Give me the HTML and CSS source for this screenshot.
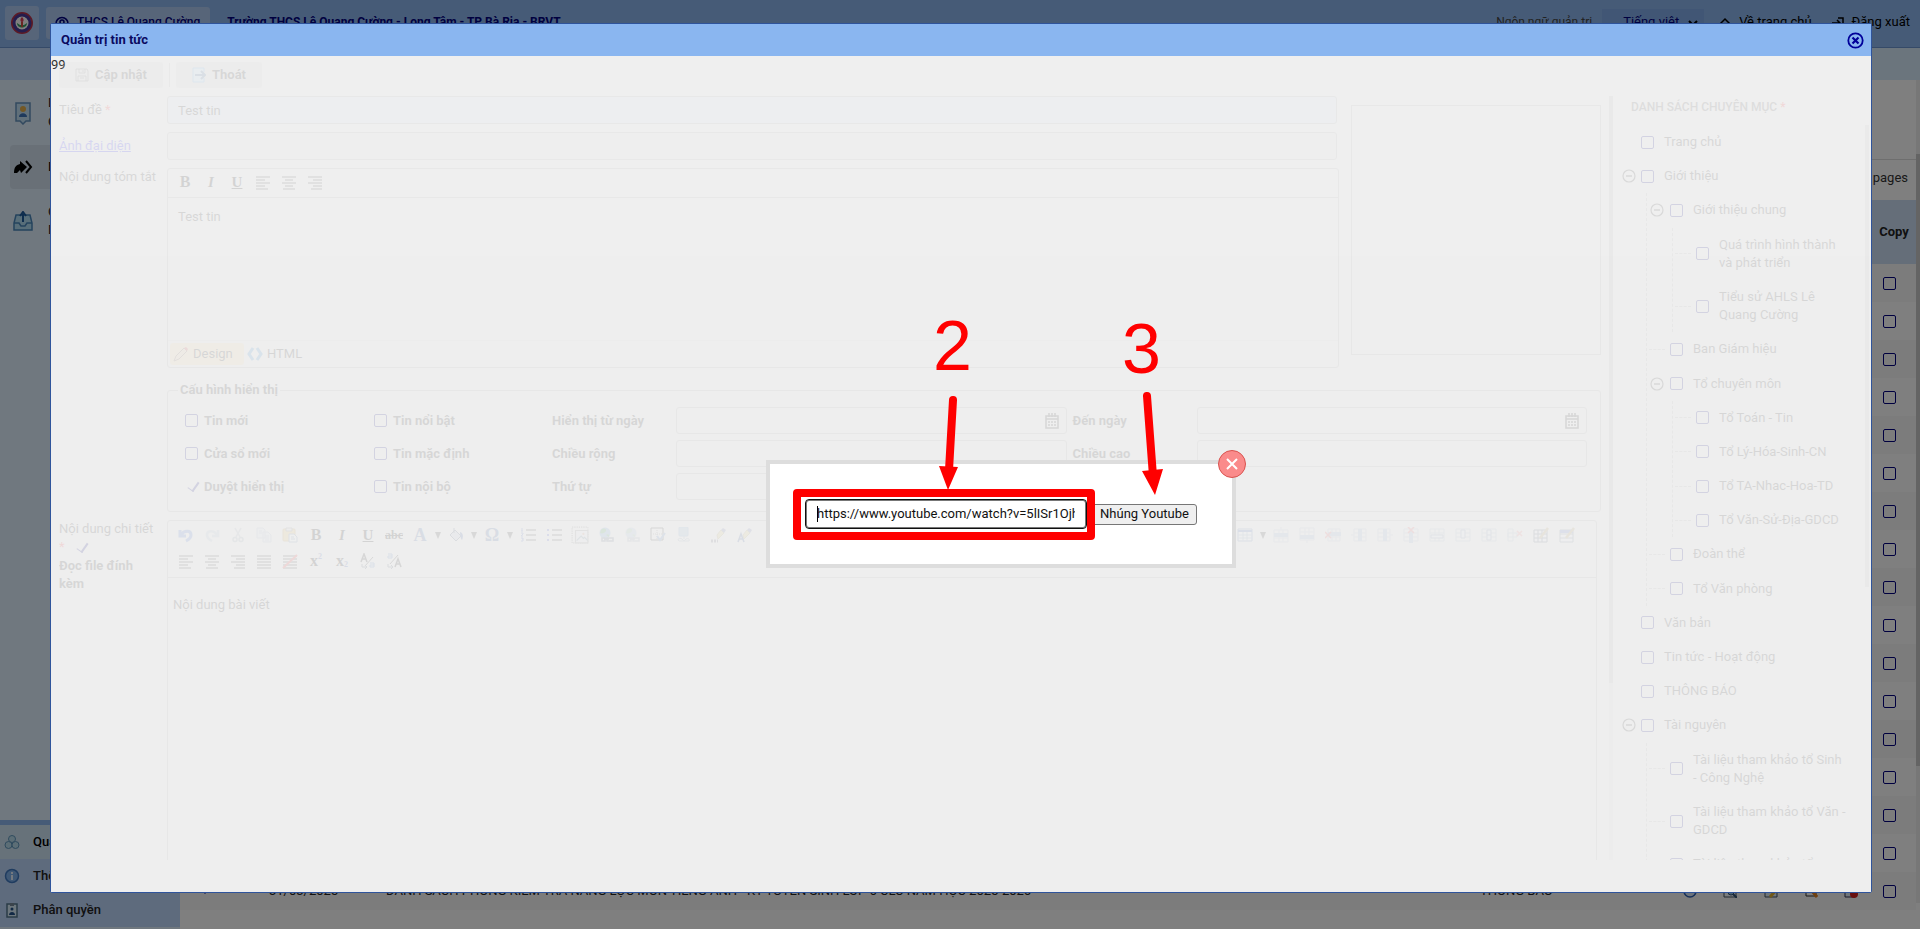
FILE: index.html
```html
<!DOCTYPE html>
<html lang="vi">
<head>
<meta charset="utf-8">
<title>Quản trị tin tức</title>
<link rel="stylesheet" href="styles.css">
</head>
<body>
<svg class="sprite" aria-hidden="true">
  <symbol id="al" viewBox="0 0 16 16"><path d="M1 3h14M1 6h9M1 9h14M1 12h9M1 15h12" stroke="#000" fill="none"/></symbol>
  <symbol id="ac" viewBox="0 0 16 16"><path d="M1 3h14M4 6h8M1 9h14M4 12h8M2 15h12" stroke="#000" fill="none"/></symbol>
  <symbol id="ar" viewBox="0 0 16 16"><path d="M1 3h14M6 6h9M1 9h14M6 12h9M4 15h11" stroke="#000" fill="none"/></symbol>
  <symbol id="aj" viewBox="0 0 16 16"><path d="M1 3h14M1 6h14M1 9h14M1 12h14M1 15h14" stroke="#000" fill="none"/></symbol>
  <symbol id="an" viewBox="0 0 16 16"><path d="M1 3h14M1 6h14M1 9h14M1 12h14M1 15h14" stroke="#000" fill="none"/><path d="M1 15L15 2" stroke="#e33" stroke-width="2"/></symbol>
  <symbol id="undo" viewBox="0 0 16 16"><path d="M2 3v6h6M3 8c3-5 10-5 10 0 0 3-3 5-5 6" stroke="#4a78d8" stroke-width="3" fill="none"/></symbol>
  <symbol id="redo" viewBox="0 0 16 16"><path d="M14 3v6H8M13 8C10 3 3 3 3 8c0 3 3 5 5 6" stroke="#b8c6d8" stroke-width="2.5" fill="none"/></symbol>
  <symbol id="cut" viewBox="0 0 16 16"><path d="M5 1l5 9M11 1L6 10" stroke="#aab4c0" stroke-width="1.5"/><circle cx="5" cy="12.500" r="2" stroke="#9aa8b8" stroke-width="1.500" fill="none"/><circle cx="11" cy="12.500" r="2" stroke="#9aa8b8" stroke-width="1.500" fill="none"/></symbol>
  <symbol id="copy" viewBox="0 0 16 16"><path d="M1 1h6l2 2v8H1zM7 5h5l3 3v7H7z" fill="#dfe6ef" stroke="#b3bfcc"/><path d="M9 9h4M9 11h4M9 13h4M3 4h3M3 6h3" stroke="#b3bfcc"/></symbol>
  <symbol id="paste" viewBox="0 0 16 16"><rect x="1" y="2" width="12" height="12" rx="1" fill="#e8c468" stroke="#c29a40"/><path d="M4 1h6v3H4z" fill="#ddd" stroke="#888"/><path d="M7 7h5l3 3v5H7z" fill="#f3f7fb" stroke="#6a86a8"/><path d="M9 10h3M9 12h4" stroke="#6a86a8"/></symbol>
  <symbol id="bucket" viewBox="0 0 16 16"><path d="M2 8l5-5 6 6-5 5z" fill="#c4d0e0" stroke="#4a5c74"/><path d="M6 1v5" stroke="#4a5c74"/><path d="M12 5c4 1 3 6 2 8-1-1-2-4-2-8z" fill="#3c60a8"/></symbol>
  <symbol id="ol" viewBox="0 0 16 16"><path d="M6 3h10M6 8h10M6 13h10" stroke="#000"/><path d="M2 1v3M1 4h2M1 6h2v1L1 9h2M1 11h2v3H1M2 12h1" stroke="#4a6ac8" fill="none"/></symbol>
  <symbol id="ul" viewBox="0 0 16 16"><path d="M6 3h10M6 8h10M6 13h10" stroke="#000"/><path d="M1 2h2v2H1zM1 7h2v2H1zM1 12h2v2H1z" fill="#4a5ad0"/></symbol>
  <symbol id="img" viewBox="0 0 16 16"><path d="M1 1h14v14H1z" fill="none" stroke="#777" stroke-dasharray="1 1"/><path d="M4 4h11v11H4z" fill="#e6ebf2" stroke="#8a8a8a"/><path d="M5 13l4-4 2 2 1-1 3 3" fill="none" stroke="#689"/><circle cx="11" cy="7" r="1" fill="#dc9878"/></symbol>
  <symbol id="link" viewBox="0 0 16 16"><circle cx="7" cy="6" r="5.500" fill="#6fa6dc"/><path d="M3 3c3-3 6-1 5 1S4 7 2 6zM8 8c2-2 4 0 3 2z" fill="#45a555"/><path d="M4 11h3v3H4zM9 11h6v3H9zM6 12h5" fill="none" stroke="#5a6c84" stroke-width="1.500"/></symbol>
  <symbol id="check" viewBox="0 0 16 16"><path d="M1 1h12v12H1z" fill="none" stroke="#222"/><path d="M7 3v9M3 7h9" stroke="#777" stroke-dasharray="1 1"/><path d="M7 9l3 4 5-7" fill="none" stroke="#5a86c8" stroke-width="2"/></symbol>
  <symbol id="pin" viewBox="0 0 16 16"><rect x="3" y="0" width="9" height="9" rx="1" fill="#96c0dc" stroke="#78a4cc"/><path d="M8 9v3M2 13c0-2 3-2 4-1l2 2 2-2c2-1 4 0 3 2H3z" fill="none" stroke="#9aabc0"/></symbol>
  <symbol id="brush" viewBox="0 0 16 16"><path d="M6 8l4-5 3 3-6 6z" fill="#e0cf80" stroke="#b8a868"/><path d="M10 3l2-2 3 2-2 3z" fill="#6a7ab0"/><path d="M0 14h7" stroke="#667" stroke-width="3" stroke-dasharray="2 1"/></symbol>
  <symbol id="brush-a" viewBox="0 0 16 16"><path d="M6 8l4-5 3 3-6 6z" fill="#e0cf80" stroke="#b8a868"/><path d="M10 3l2-2 3 2-2 3z" fill="#6a7ab0"/><path d="M1 15l3-8 3 8M2 12h4" fill="none" stroke="#35589c" stroke-width="1.500"/></symbol>
  <symbol id="tbl" viewBox="0 0 16 16"><path d="M1 2h14v12H1z" fill="#f0f4fa" stroke="#5f7aa8"/><path d="M1 3h14v2H1z" fill="#4a6ac0"/><path d="M1 8h14M1 11h14M6 5v9M10 5v9" stroke="#8ea6c6"/></symbol>
  <symbol id="row-up" viewBox="0 0 16 16"><path d="M1 3h14v12H1zM1 11h14M6 3v12M10 3v12M8 0v3" fill="none" stroke="#b9c7dc"/><path d="M1 6h14v4H1z" fill="#9cb2d4"/></symbol>
  <symbol id="row-down" viewBox="0 0 16 16"><path d="M1 1h14v12H1zM1 5h14M6 1v12M10 1v12M8 13v3" fill="none" stroke="#b9c7dc"/><path d="M1 8h14v4H1z" fill="#9cb2d4"/></symbol>
  <symbol id="row-del" viewBox="0 0 16 16"><path d="M3 2h12v12H3zM3 10h12M7 2v12M11 2v12" fill="none" stroke="#b9c7dc"/><path d="M3 5h13v4H3z" fill="#9cb2d4"/><path d="M0 5l6 6M6 5l-6 6" stroke="#e66" stroke-width="1.500"/></symbol>
  <symbol id="col-l" viewBox="0 0 16 16"><path d="M3 2h12v12H3zM3 6h12M3 10h12M0 8h3" fill="none" stroke="#b9c7dc"/><path d="M7 2h4v12H7z" fill="#9cb2d4"/></symbol>
  <symbol id="col-r" viewBox="0 0 16 16"><path d="M1 2h12v12H1zM1 6h12M1 10h12M13 8h3" fill="none" stroke="#b9c7dc"/><path d="M6 2h4v12H6z" fill="#9cb2d4"/></symbol>
  <symbol id="col-del" viewBox="0 0 16 16"><path d="M1 2h14v12H1zM1 6h14M1 10h14" fill="none" stroke="#b9c7dc"/><path d="M6 4h4v12H6z" fill="#9cb2d4"/><path d="M5 0l6 6M11 0L5 6" stroke="#e66" stroke-width="1.500"/></symbol>
  <symbol id="merge-h" viewBox="0 0 16 16"><path d="M1 2h14v12H1zM1 6h14M6 2v12M10 2v12" fill="none" stroke="#b0bfd4"/><path d="M2 8h12v3H2z" fill="#e6eef8" stroke="#8295b4"/></symbol>
  <symbol id="merge-v" viewBox="0 0 16 16"><path d="M1 2h14v12H1zM1 6h14M1 10h14" fill="none" stroke="#b0bfd4"/><path d="M6 3h4v8H6z" fill="#e6eef8" stroke="#8295b4"/></symbol>
  <symbol id="cell-split" viewBox="0 0 16 16"><path d="M1 2h14v12H1zM1 6h14M1 10h14" fill="none" stroke="#b0bfd4"/><path d="M6 3h4v10H6zM6 8h4" fill="#e6eef8" stroke="#8295b4"/></symbol>
  <symbol id="cell-del" viewBox="0 0 16 16"><path d="M1 2h5v12H1zM1 6h9v4H1z" fill="none" stroke="#b0bfd4"/><path d="M10 4l5 5M15 4l-5 5" stroke="#e88" stroke-width="1.500"/></symbol>
  <symbol id="tedit" viewBox="0 0 16 16"><path d="M1 3h13v12H1zM1 7h13M1 11h13M5 3v12M9 3v12" fill="#f2f4f8" stroke="#4a586c"/><path d="M7 11l8-10" stroke="#b89a5a" stroke-width="2.500"/></symbol>
  <symbol id="tprop" viewBox="0 0 16 16"><path d="M1 3h13v12H1zM1 7h13M1 11h13" fill="#f2f4f8" stroke="#6a788c"/><path d="M1 3h13v3H1z" fill="#5a7ad0"/><path d="M7 11l8-10" stroke="#b89a5a" stroke-width="2.500"/></symbol>
  <symbol id="cal" viewBox="0 0 16 16"><path d="M2 3h12v12H2zM2 6h12M5 0v4M8 0v4M11 0v4" fill="none" stroke="#222" stroke-width="1.500"/><path d="M4 9h8M4 12h8" stroke="#222" stroke-width="1.500" stroke-dasharray="2 1"/></symbol>
  <symbol id="minus" viewBox="0 0 14 14"><circle cx="7" cy="7" r="6" fill="none" stroke="#333" stroke-width="1.200"/><path d="M4 7h6" stroke="#333" stroke-width="1.500"/></symbol>
  <symbol id="to-small" viewBox="0 0 16 16"><path d="M1 9l3-8 3 8M2 6h4" fill="none" stroke="#222" stroke-width="1.500"/><path d="M5 13L13 4" stroke="#333"/><path d="M10 10h4v4h-4v-2h4" fill="none" stroke="#4a7ac0"/><path d="M2 11v3h4M5 12l2 2-2 2" fill="none" stroke="#4a5a70"/></symbol>
  <symbol id="to-big" viewBox="0 0 16 16"><path d="M9 14l3-8 3 8M10 11h4" fill="none" stroke="#222" stroke-width="1.500"/><path d="M4 11L12 2" stroke="#333"/><path d="M2 1h4v4H2V3h4" fill="none" stroke="#4a7ac0"/><path d="M2 11v3h4M5 12l2 2-2 2" fill="none" stroke="#4a5a70"/></symbol>
</svg>

<header class="top">
  <span class="logo"><svg width="24" height="24" viewBox="0 0 24 24"><circle cx="12" cy="12" r="10" fill="#fff" stroke="#b8354b" stroke-width="2"/><circle cx="12" cy="12" r="8" fill="none" stroke="#4a3a9a" stroke-width="3"/><circle cx="12" cy="12" r="6" fill="#fff"/><path d="M7 12c0 6 10 6 10 0l-3 2h-4z" fill="#3aa568"/><path d="M12 6c-3 3-1 5 0 5s3-2 0-5z" fill="#e0405a"/><path d="M12 11v5" stroke="#d05040" stroke-width="2"/></svg></span>
  <span class="site"><svg width="14" height="14" viewBox="0 0 14 14"><path d="M3 12a6 6 0 1 1 8 0" fill="none" stroke="#000080" stroke-width="1.500"/><circle cx="7" cy="6" r="2" fill="none" stroke="#000080" stroke-width="1.500"/><path d="M5 12V9h4v3" fill="none" stroke="#000080" stroke-width="1.500"/></svg>THCS Lê Quang Cường</span>
  <b class="school">Trường THCS Lê Quang Cường - Long Tâm - TP Bà Rịa - BRVT</b>
  <label class="lang" for="lang">Ngôn ngữ quản trị</label>
  <span class="lang-box"><select id="lang" class="lang-select"><option>Tiếng việt</option></select><svg width="10" height="8" viewBox="0 0 10 8"><path d="M1 2l4 4 4-4" fill="none" stroke="#000" stroke-width="2"/></svg></span>
  <a class="top-link" href="#"><svg width="12" height="12" viewBox="0 0 12 12"><path d="M1 7l5-5 5 5M3 6v5h6V6" fill="none" stroke="#000" stroke-width="1.500"/></svg>Về trang chủ</a>
  <a class="top-link" href="#"><svg width="12" height="12" viewBox="0 0 12 12"><path d="M0 6h7M5 3l3 3-3 3M6 1h5v10H6" fill="none" stroke="#000" stroke-width="1.500"/></svg>Đăng xuất</a>
</header>
<div class="sub"><div class="sub-left"></div></div>
<div class="page">
  <nav class="side">
    <a class="side-item" href="#"><svg width="20" height="24" viewBox="0 0 20 24"><path d="M3 2h14v18h-4l-3 3-3-3H3z" fill="#c3e0f5" stroke="#6593be" stroke-width="1.500"/><circle cx="10" cy="8" r="3" fill="#e6b04a"/><path d="M6 16c0-5 8-5 8 0z" fill="#3f74b8"/></svg><span>D<br>C</span></a>
    <a class="side-item on" href="#"><svg width="20" height="16" viewBox="0 0 20 16"><path d="M1 14c0-6 2-8 6-9V2l7 6-6 6-1-3-3 3z" fill="#000"/><path d="M13 2l5 6-5 6" fill="none" stroke="#000" stroke-width="2"/></svg><span>D</span></a>
    <a class="side-item" href="#"><svg width="20" height="20" viewBox="0 0 20 20"><path d="M3 4h14l2 8v7H1v-7z" fill="#b0dcf2" stroke="#4a86ba" stroke-width="1.500"/><path d="M1 12h5l2 3h4l2-3h5" fill="none" stroke="#4a86ba" stroke-width="1.500"/><path d="M10 11V3M7 5l3-4 3 4" fill="none" stroke="#1d5a9c" stroke-width="2"/></svg><span>C<br>D</span></a>
    <div class="side-foot">
      <a class="foot-item sel" href="#"><svg width="16" height="16" viewBox="0 0 16 16"><g fill="#b9dcec" stroke="#5f96bc" stroke-width="1"><circle cx="8" cy="5" r="3.500"/><circle cx="4.500" cy="11" r="3.500"/><circle cx="11.500" cy="11" r="3.500"/></g></svg>Quản trị</a>
      <a class="foot-item" href="#"><svg width="16" height="16" viewBox="0 0 16 16"><circle cx="8" cy="8" r="6.500" fill="#7fb0ea" stroke="#3f78c0" stroke-width="1.500"/><path d="M8 4v2M8 7v5" stroke="#e8f2ff" stroke-width="2"/></svg>Thông tin</a>
      <a class="foot-item" href="#"><svg width="16" height="16" viewBox="0 0 16 16"><path d="M3 2h10v13H3z" fill="#d8ecf8" stroke="#54788f" stroke-width="1.500"/><path d="M6 1h4v3H6z" fill="#789"/><circle cx="8" cy="7" r="1.500" fill="#24538a"/><path d="M5 13c0-4 6-4 6 0z" fill="#24538a"/></svg>Phân quyền</a>
    </div>
  </nav>
  <main class="main">
    <div class="pager">pages</div>
    <table class="grid">
      <thead><tr><th class="c-mark"></th><th class="c-date"></th><th></th><th class="c-cat"></th><th class="c-act"></th><th class="c-copy">Copy</th></tr></thead>
      <tbody>
        <tr><td colspan="5"></td><td class="c-copy"><input type="checkbox" class="cb" aria-label="Copy 1"></td></tr>
        <tr><td colspan="5"></td><td class="c-copy"><input type="checkbox" class="cb" aria-label="Copy 2"></td></tr>
        <tr><td colspan="5"></td><td class="c-copy"><input type="checkbox" class="cb" aria-label="Copy 3"></td></tr>
        <tr><td colspan="5"></td><td class="c-copy"><input type="checkbox" class="cb" aria-label="Copy 4"></td></tr>
        <tr><td colspan="5"></td><td class="c-copy"><input type="checkbox" class="cb" aria-label="Copy 5"></td></tr>
        <tr><td colspan="5"></td><td class="c-copy"><input type="checkbox" class="cb" aria-label="Copy 6"></td></tr>
        <tr><td colspan="5"></td><td class="c-copy"><input type="checkbox" class="cb" aria-label="Copy 7"></td></tr>
        <tr><td colspan="5"></td><td class="c-copy"><input type="checkbox" class="cb" aria-label="Copy 8"></td></tr>
        <tr><td colspan="5"></td><td class="c-copy"><input type="checkbox" class="cb" aria-label="Copy 9"></td></tr>
        <tr><td colspan="5"></td><td class="c-copy"><input type="checkbox" class="cb" aria-label="Copy 10"></td></tr>
        <tr><td colspan="5"></td><td class="c-copy"><input type="checkbox" class="cb" aria-label="Copy 11"></td></tr>
        <tr><td colspan="5"></td><td class="c-copy"><input type="checkbox" class="cb" aria-label="Copy 12"></td></tr>
        <tr><td colspan="5"></td><td class="c-copy"><input type="checkbox" class="cb" aria-label="Copy 13"></td></tr>
        <tr><td colspan="5"></td><td class="c-copy"><input type="checkbox" class="cb" aria-label="Copy 14"></td></tr>
        <tr><td colspan="5"></td><td class="c-copy"><input type="checkbox" class="cb" aria-label="Copy 15"></td></tr>
        <tr><td colspan="5"></td><td class="c-copy"><input type="checkbox" class="cb" aria-label="Copy 16"></td></tr>
        <tr>
          <td class="c-mark"><svg width="10" height="10" viewBox="0 0 10 10"><path d="M1 4l4 5 4-5z" fill="#000080"/></svg></td>
          <td class="c-date">31/03/2025</td>
          <td class="c-title">DANH SÁCH PHÒNG KIỂM TRA NĂNG LỰC MÔN TIẾNG ANH - KT TUYỂN SINH LỚP 6 CLC NĂM HỌC 2025-2026</td>
          <td class="c-cat">THÔNG BÁO</td>
          <td class="c-act"><div class="acts">
            <svg width="14" height="14" viewBox="0 0 14 14"><circle cx="7" cy="7" r="6" fill="#dbe9fa" stroke="#2d5fb0" stroke-width="1.500"/></svg>
            <svg width="14" height="14" viewBox="0 0 14 14"><path d="M1 1h12v12H1z" fill="#f4f8fc" stroke="#456"/><circle cx="8" cy="8" r="3" fill="#9cc8ea" stroke="#357"/><path d="M10 10l4 4" stroke="#357" stroke-width="2"/></svg>
            <svg width="14" height="14" viewBox="0 0 14 14"><path d="M1 1h12v12H1z" fill="#dfeaf4" stroke="#456"/><path d="M6 13l7-8" stroke="#e0b030" stroke-width="3"/></svg>
            <svg width="14" height="14" viewBox="0 0 14 14"><path d="M2 1h10v11H2z" fill="#fff" stroke="#333"/><path d="M8 7l5 6" stroke="#e08020" stroke-width="3"/></svg>
            <svg width="14" height="14" viewBox="0 0 14 14"><path d="M1 1h10v12H1z" fill="#dfeaf4" stroke="#335"/><circle cx="10" cy="10" r="4" fill="#d02020"/></svg>
          </div></td>
          <td class="c-copy"><input type="checkbox" class="cb" aria-label="Copy 17"></td>
        </tr>
      </tbody>
    </table>
  </main>
  <div class="page-scroll"><div class="page-thumb"></div></div>
</div>

<div class="dim"></div>

<section class="dialog" role="dialog" aria-label="Quản trị tin tức">
  <div class="dialog-bar"><b>Quản trị tin tức</b>
    <button class="icon-btn" type="button" aria-label="Đóng"><svg width="17" height="17" viewBox="0 0 17 17"><circle cx="8.500" cy="8.500" r="7.200" fill="none" stroke="#00009a" stroke-width="1.800"/><path d="M5.500 5.500l6 6M11.500 5.500l-6 6" stroke="#00009a" stroke-width="2.200"/></svg></button>
  </div>
  <div class="dialog-body">
    <span class="counter">99</span>
    <div class="faded">
      <div class="cmds">
        <button class="cmd" type="button"><svg width="14" height="14" viewBox="0 0 14 14"><path d="M1 1h11l1 2v10H1zM4 1v4h6V1M3 13V8h8v5M8 2v2M5 10h4" fill="none" stroke="#666"/></svg>Cập nhật</button>
        <span class="cmd-sep"></span>
        <button class="cmd exit" type="button"><svg width="14" height="16" viewBox="0 0 14 16"><path d="M12 5V1H1v14h11v-4" fill="#c0e0fa" stroke="#5aa6e8"/><path d="M3 8h9M9 4l4 4-4 4" fill="none" stroke="#3a6a9a" stroke-width="2"/></svg>Thoát</button>
      </div>
      <div class="cols">
        <div class="form">
          <div class="fields">
            <label class="lab" for="t">Tiêu đề <span class="req">*</span></label>
            <input id="t" class="box filled" value="Test tin">
            <div class="thumb"></div>
            <a class="lab lnk" href="#" id="pic-l">Ảnh đại diện</a>
            <input class="box" aria-labelledby="pic-l">
            <span class="lab top-lab">Nội dung tóm tắt</span>
            <div class="editor small">
              <div class="tools"><div class="tset">
                <b class="tb">B</b><i class="tb">I</i><u class="tb">U</u>
                <span class="tb"><svg><use href="#al"/></svg></span><span class="tb"><svg><use href="#ac"/></svg></span><span class="tb"><svg><use href="#ar"/></svg></span>
              </div></div>
              <div class="area">Test tin</div>
              <div class="modes">
                <button type="button" class="mode on"><svg width="16" height="16" viewBox="0 0 16 16"><path d="M1 15l2-5 8-8 3 3-8 8z" fill="#f4dcae" stroke="#8a6a50"/><path d="M11 2l2-1 2 2-1 2z" fill="#d44"/></svg>Design</button>
                <button type="button" class="mode"><svg width="16" height="14" viewBox="0 0 16 14"><path d="M6 1L2 7l4 6M10 1l4 6-4 6" fill="none" stroke="#3a90d8" stroke-width="3"/></svg>HTML</button>
              </div>
            </div>
          </div>
          <fieldset class="opts">
            <legend>Cấu hình hiển thị</legend>
            <div class="opt-grid">
              <label class="opt"><input type="checkbox" class="cb">Tin mới</label>
              <label class="opt"><input type="checkbox" class="cb">Tin nổi bật</label>
              <label for="d1">Hiển thị từ ngày</label>
              <div class="box date"><input id="d1"><svg width="16" height="16"><use href="#cal"/></svg></div>
              <label for="d2">Đến ngày</label>
              <div class="box date"><input id="d2"><svg width="16" height="16"><use href="#cal"/></svg></div>
              <label class="opt"><input type="checkbox" class="cb">Cửa sổ mới</label>
              <label class="opt"><input type="checkbox" class="cb">Tin mặc định</label>
              <label for="w">Chiều rộng</label><input id="w" class="box">
              <label for="h">Chiều cao</label><input id="h" class="box">
              <label class="opt"><input type="checkbox" class="cb" checked>Duyệt hiển thị</label>
              <label class="opt"><input type="checkbox" class="cb">Tin nội bộ</label>
              <label for="o">Thứ tự</label><input id="o" class="box">
            </div>
          </fieldset>
          <div class="detail">
            <div class="side-lab">Nội dung chi tiết<label class="opt" for="read"><span class="req">*</span><input id="read" type="checkbox" class="cb" checked></label><label class="read-lab" for="read">Đọc file đính kèm</label></div>
            <div class="editor large">
              <div class="tools">
                <div class="trow">
                  <div class="tset">
                    <span class="tb"><svg><use href="#undo"/></svg></span><span class="tb"><svg><use href="#redo"/></svg></span><span class="tb"><svg><use href="#cut"/></svg></span><span class="tb"><svg><use href="#copy"/></svg></span><span class="tb"><svg><use href="#paste"/></svg></span>
                    <b class="tb">B</b><i class="tb">I</i><u class="tb">U</u><s class="tb abc">abc</s>
                    <b class="tb blue">A</b><span class="dd"></span><span class="tb"><svg><use href="#bucket"/></svg></span><span class="dd"></span><b class="tb blue">Ω</b><span class="dd"></span>
                    <span class="tb"><svg><use href="#ol"/></svg></span><span class="tb"><svg><use href="#ul"/></svg></span><span class="tb big"><svg><use href="#img"/></svg></span><span class="tb"><svg><use href="#link"/></svg></span><span class="tb pale"><svg><use href="#link"/></svg></span><span class="tb"><svg><use href="#check"/></svg></span><span class="tb"><svg><use href="#pin"/></svg></span>
                    <span class="tb gap"><svg><use href="#brush"/></svg></span><span class="tb"><svg><use href="#brush-a"/></svg></span>
                  </div>
                  <div class="tset">
                    <span class="tb"><svg><use href="#tbl"/></svg></span><span class="dd"></span><span class="tb"><svg><use href="#row-up"/></svg></span><span class="tb"><svg><use href="#row-down"/></svg></span><span class="tb"><svg><use href="#row-del"/></svg></span><span class="tb"><svg><use href="#col-l"/></svg></span><span class="tb"><svg><use href="#col-r"/></svg></span><span class="tb"><svg><use href="#col-del"/></svg></span><span class="tb"><svg><use href="#merge-h"/></svg></span><span class="tb"><svg><use href="#merge-v"/></svg></span><span class="tb"><svg><use href="#cell-split"/></svg></span><span class="tb"><svg><use href="#cell-del"/></svg></span><span class="tb"><svg><use href="#tedit"/></svg></span><span class="tb"><svg><use href="#tprop"/></svg></span>
                  </div>
                </div>
                <div class="tset">
                  <span class="tb"><svg><use href="#al"/></svg></span><span class="tb"><svg><use href="#ac"/></svg></span><span class="tb"><svg><use href="#ar"/></svg></span><span class="tb"><svg><use href="#aj"/></svg></span><span class="tb"><svg><use href="#an"/></svg></span>
                  <b class="tb">x<sup>2</sup></b><b class="tb">x<sub>2</sub></b><span class="tb"><svg><use href="#to-small"/></svg></span><span class="tb"><svg><use href="#to-big"/></svg></span>
                </div>
              </div>
              <div class="area">Nội dung bài viết</div>
            </div>
          </div>
        </div>
        <div class="split"><div class="split-thumb"></div></div>
        <aside class="cats">
          <h2>DANH SÁCH CHUYÊN MỤC <span class="req">*</span></h2>
          <div class="cats-scroll">
          <ul class="tree">
            <li><label class="node"><span class="slot"></span><input type="checkbox" class="cb"><span>Trang chủ</span></label></li>
            <li><label class="node"><span class="slot"><svg><use href="#minus"/></svg></span><input type="checkbox" class="cb"><span>Giới thiệu</span></label>
              <ul class="branch">
                <li><label class="node"><span class="slot"><svg><use href="#minus"/></svg></span><input type="checkbox" class="cb"><span>Giới thiệu chung</span></label>
                  <ul class="branch">
                    <li><label class="node"><span class="slot tick"></span><input type="checkbox" class="cb"><span>Quá trình hình thành và phát triển</span></label></li>
                    <li><label class="node"><span class="slot tick"></span><input type="checkbox" class="cb"><span>Tiểu sử AHLS Lê Quang Cường</span></label></li>
                  </ul></li>
                <li><label class="node"><span class="slot tick"></span><input type="checkbox" class="cb"><span>Ban Giám hiệu</span></label></li>
                <li><label class="node"><span class="slot"><svg><use href="#minus"/></svg></span><input type="checkbox" class="cb"><span>Tổ chuyên môn</span></label>
                  <ul class="branch">
                    <li><label class="node"><span class="slot tick"></span><input type="checkbox" class="cb"><span>Tổ Toán - Tin</span></label></li>
                    <li><label class="node"><span class="slot tick"></span><input type="checkbox" class="cb"><span>Tổ Lý-Hóa-Sinh-CN</span></label></li>
                    <li><label class="node"><span class="slot tick"></span><input type="checkbox" class="cb"><span>Tổ TA-Nhac-Hoa-TD</span></label></li>
                    <li><label class="node"><span class="slot tick"></span><input type="checkbox" class="cb"><span>Tổ Văn-Sử-Địa-GDCD</span></label></li>
                  </ul></li>
                <li><label class="node"><span class="slot tick"></span><input type="checkbox" class="cb"><span>Đoàn thể</span></label></li>
                <li><label class="node"><span class="slot tick"></span><input type="checkbox" class="cb"><span>Tổ Văn phòng</span></label></li>
              </ul></li>
            <li><label class="node"><span class="slot"></span><input type="checkbox" class="cb"><span>Văn bản</span></label></li>
            <li><label class="node"><span class="slot"></span><input type="checkbox" class="cb"><span>Tin tức - Hoạt động</span></label></li>
            <li><label class="node"><span class="slot"></span><input type="checkbox" class="cb"><span>THÔNG BÁO</span></label></li>
            <li><label class="node"><span class="slot"><svg><use href="#minus"/></svg></span><input type="checkbox" class="cb"><span>Tài nguyên</span></label>
              <ul class="branch">
                <li><label class="node"><span class="slot tick"></span><input type="checkbox" class="cb"><span>Tài liệu tham khảo tổ Sinh - Công Nghệ</span></label></li>
                <li><label class="node"><span class="slot tick"></span><input type="checkbox" class="cb"><span>Tài liệu tham khảo tổ Văn - GDCD</span></label></li>
                <li><label class="node"><span class="slot tick"></span><input type="checkbox" class="cb"><span>Tài liệu tham khảo tổ</span></label></li>
              </ul></li>
          </ul>
          <div class="cats-thumb"></div>
          </div>
        </aside>
      </div>
    </div>
  </div>
</section>

<form class="embed">
  <input class="url" aria-label="Youtube" value="https://www.youtube.com/watch?v=5lISr1Ojh">
  <button type="button" class="go">Nhúng Youtube</button>
  <button type="button" class="shut" aria-label="Đóng"><svg width="12" height="12" viewBox="0 0 12 12"><path d="M1 1l10 10M11 1L1 11" stroke="#fff" stroke-width="2"/></svg></button>
</form>

<div class="frame"></div>
<span class="num two">2</span>
<span class="num three">3</span>
<svg class="arrows" width="240" height="110" viewBox="930 390 240 110">
  <path d="M953 400L949 470M1147 396L1153 476" stroke="#f00" stroke-width="8" stroke-linecap="round"/>
  <path d="M939 466l19 1-10 23zM1142 471l21-2-8 26z" fill="#f00"/>
</svg>
</body>
</html>
```
FILE: styles.css
```css
* { box-sizing: border-box; }
body { margin: 0; height: 100vh; overflow: hidden; display: flex; flex-direction: column; background: #fff; color: #333; font: 13px/1.4 Roboto, "Liberation Sans", sans-serif; }
input, button, select { font: inherit; color: inherit; }
a { color: inherit; text-decoration: none; }
.sprite { position: absolute; width: 0; height: 0; }

.cb { appearance: none; flex: none; width: 13px; height: 13px; margin: 0; border: 1px solid #000080; border-radius: 2px; }
.cb:checked { border-color: transparent; }
.cb:checked::before { content: ""; display: block; width: 5px; height: 10px; margin: -1px 0 0 4px; border: solid #000080; border-width: 0 2px 1px 0; transform: rotate(35deg); }

.top { flex: none; display: flex; align-items: center; height: 48px; padding: 0 10px 2px 5px; background: #8cb6ee; border-bottom: 1px solid #6b95d0; color: #000; }
.logo { display: grid; place-items: center; width: 34px; height: 34px; background: #aecaf3; border-radius: 3px; }
.site { display: flex; align-items: center; gap: 8px; height: 32px; margin-left: 7px; padding: 0 10px 0 9px; background: #aecaf3; border-radius: 3px; color: #000080; font-size: 12px; font-weight: 500; }
.school { flex: 1; margin-left: 17px; color: #000080; font-size: 12px; font-weight: 700; }
.lang { color: #444; font-size: 12px; }
.lang-box { display: flex; align-items: center; width: 102px; height: 28px; margin: 0 15px 0 10px; padding: 0 6px 0 17px; background: #82adea; }
.lang-select { appearance: none; flex: 1; min-width: 0; padding: 0 4px; border: 0; background: none; color: #000080; }
.top-link { display: flex; align-items: center; gap: 8px; }
.top-link + .top-link { margin-left: 20px; }
.sub { flex: none; height: 32px; background: #d6eafa; }
.sub-left { width: 180px; height: 100%; background: #bdd6fa; }

.page { flex: 1; min-height: 0; display: flex; }
.side { width: 180px; display: flex; flex-direction: column; background: #e0f0fe; color: #222; }
.side-item { display: flex; align-items: center; gap: 15px; height: 44px; margin: 10px 0 0 10px; padding-left: 3px; }
.side-item:first-child { height: 45px; }
.side-item.on { background: #d2e0ee; border-radius: 4px; color: #000; }
.side-foot { margin-top: auto; margin-bottom: 2px; border-top: 5px solid #8cb6ee; background: #bdd6fa; font-weight: 500; }
.foot-item { display: flex; align-items: center; gap: 13px; height: 34px; padding-left: 4px; }
.foot-item.sel { background: #cfe4f5; color: #000; }
.main { flex: 1; display: flex; flex-direction: column; padding-top: 79px; }
.pager { height: 41px; padding: 9px 8px 0 0; border-top: 1px solid #ddd; text-align: right; }
.grid { width: 100%; border-collapse: collapse; table-layout: fixed; color: #222; }
.grid th { height: 64px; padding: 0; background: #cbddf2; }
.grid td { height: 38px; padding: 0; }
.grid tbody tr:nth-child(odd) td { background: #f8f8f8; }
.c-mark { width: 72px; }
td.c-mark { padding-left: 20px; }
.c-date { width: 134px; }
td.c-date { padding-left: 17px; }
.c-title { white-space: nowrap; }
.c-cat { width: 192px; }
.c-act { width: 190px; }
.c-copy { width: 54px; text-align: center; }
.grid th.c-copy { padding-left: 10px; }
.c-copy .cb { display: block; margin: 0 auto; }
.acts { display: flex; justify-content: space-between; padding: 0 4px 0 11px; }
.page-scroll { width: 4px; height: 823px; padding-top: 74px; background: #eee; }
.page-thumb { height: 612px; background: #c8c8c8; }

.dim { position: absolute; inset: 0; background: rgba(0, 0, 0, .5); }

.dialog { position: absolute; inset: 23px 48px 36px 50px; display: flex; flex-direction: column; border: 1px solid #2f549b; border-radius: 2px; background: #eee; }
.dialog-bar { flex: none; display: flex; align-items: center; justify-content: space-between; height: 32px; padding: 0 7px 0 10px; background: #8ab6f0; color: #0a0a60; }
.icon-btn { display: flex; padding: 0; border: 0; background: none; }
.dialog-body { flex: 1; min-height: 0; position: relative; padding-bottom: 32px; background: linear-gradient(#efefef 200px, #eee 200px); }
.counter { position: absolute; left: 0; top: 0; }
.faded { height: 100%; display: flex; flex-direction: column; overflow: hidden; opacity: .11; color: #222; }
.cmds { flex: none; display: flex; align-items: center; gap: 6px; height: 40px; padding: 0 8px 2px; }
.cmd { display: flex; align-items: center; justify-content: center; gap: 6px; width: 104px; height: 26px; padding: 0; border: 0; border-radius: 3px; background: #dcdcdc; font-weight: 700; }
.cmd.exit { width: 86px; }
.cmd-sep { width: 1px; height: 24px; background: #bbb; }
.cols { flex: 1; min-height: 0; display: flex; }
.form { flex: 1; min-width: 0; padding-left: 8px; }
.fields { display: grid; grid-template-columns: 108px minmax(0, 1fr) 250px; grid-template-rows: 28px 28px 200px; gap: 8px 0; padding-right: 8px; }
.lab { align-self: center; }
.lnk { color: #1a1aff; text-decoration: underline; }
.top-lab { align-self: start; }
.req { color: #f33; }
.box { width: 100%; height: 28px; padding: 0 10px; border: 1px solid #b4b4b4; border-radius: 3px; background: #eee; }
.box.filled { background: #dfe9f8; }
.fields > .editor { margin-right: 12px; }
.fields > .box { width: auto; margin-right: 14px; }
.thumb { grid-column: 3; grid-row: 1 / 4; align-self: start; height: 250px; margin-top: 9px; border: 1px solid #b4b4b4; }
.editor { display: flex; flex-direction: column; border: 1px solid #b4b4b4; border-radius: 3px; }
.tools { flex: none; padding: 1px 5px 0; border-bottom: 1px solid #b4b4b4; }
.small .tools { height: 29px; padding: 0 4px; }
.area { flex: 1; padding: 10px; }
.tset, .trow { display: flex; align-items: center; }
.tset { height: 26px; }
.trow { justify-content: space-between; padding-right: 11px; }
.tb { display: flex; align-items: center; justify-content: center; width: 26px; height: 26px; font: 15px/1 "Liberation Serif", serif; color: #000; }
b.tb { font-weight: 700; font-size: 16px; }
i.tb { font-style: italic; font-weight: 700; }
u.tb { text-decoration: underline; font-weight: 700; }
.tb.abc { font-size: 12px; text-decoration: line-through; font-weight: 700; }
.tb svg { width: 16px; height: 16px; }
.tb.big svg { width: 18px; height: 18px; }
.tb sup, .tb sub { font-size: 8px; color: #35a; }
.tb sup { align-self: flex-start; margin-top: 5px; }
.tb sub { align-self: flex-end; margin-bottom: 5px; }
b.tb.blue { color: #35589c; font-size: 18px; }
.tb.pale { opacity: .5; }
.tb.gap { margin-left: 9px; }
.dd { width: 10px; display: flex; justify-content: center; }
.dd::before { content: ""; border: 3px solid transparent; border-top: 7px solid #333; border-bottom: 0; }
.modes { display: flex; height: 27px; padding: 2px; border-top: 1px solid #ddd; }
.mode { display: flex; align-items: center; gap: 4px; padding: 0 3px; border: 0; border-radius: 3px; background: none; }
.mode.on { width: 74px; background: #fbe3ae; }
.opts { margin: 13px 8px 0 108px; padding: 8px 13px 11px 17px; border: 1px solid #b4b4b4; border-radius: 3px; font-weight: 700; }
.opts legend { margin-left: -7px; padding: 0 2px; }
.opt-grid { display: grid; grid-template-columns: 183px 172px 118px 1fr 118px 1fr; gap: 6px; align-items: center; }
.opt-grid .box { height: 27px; }
.opt { display: flex; align-items: center; gap: 6px; }
.date { display: flex; align-items: center; padding-right: 6px; }
.date input { flex: 1; border: 0; background: none; }
.detail { display: flex; margin-top: 8px; padding-right: 12px; }
.side-lab { width: 108px; padding-right: 6px; }
.side-lab .opt { gap: 9px; }
.read-lab { display: block; padding-right: 16px; font-weight: 700; }
.large { flex: 1; height: 400px; }
.large .tools { height: 57px; }
.large .area { padding: 18px 5px; }
.split { width: 4px; background: #e2e2e2; }
.split-thumb { height: 587px; background: #c0c0c0; }
.cats { width: 258px; padding-left: 7px; display: flex; flex-direction: column; }
.cats h2 { margin: 0; padding: 3px 11px 0; height: 29px; color: #555; font-size: 12px; font-weight: 500; }
.cats-scroll { flex: 1; min-height: 0; display: flex; }
.tree { flex: 1; padding: 0; }
.tree, .branch { margin: 0; list-style: none; }
.branch { margin-left: 26px; padding-left: 2px; border-left: 1px dashed #b5b5b5; }
.branch .branch { margin-left: 23px; }
.node { display: flex; align-items: center; padding: 8px 0; }
.slot { flex: none; display: flex; justify-content: center; width: 16px; margin-right: 5px; }
.tree > li > .node .slot { justify-content: flex-end; }
.slot svg { width: 14px; height: 14px; }
.tick::before { content: ""; width: 16px; border-top: 1px dashed #b5b5b5; }
.node .cb { margin-right: 10px; }
.cats-thumb { flex: none; width: 4px; height: 462px; margin: 0 2px 0 18px; background: #c4c4c4; }

.embed { position: absolute; left: 766px; top: 460px; display: flex; align-items: center; gap: 5px; padding: 35px; border: 4px solid #ddd; background: #fff; color: #111; }
.url { width: 282px; height: 30px; padding: 0 11px 2px; border: 1px solid #101010; border-radius: 4px; box-shadow: inset 0 0 0 1px #777; background: linear-gradient(#000, #000) 11px center / 1px 16px no-repeat #fff; }
.go { width: 105px; height: 21px; padding: 0; border: 1px solid #767676; border-radius: 3px; background: #efefef; line-height: 18px; }
.shut { position: absolute; right: -14px; top: -14px; display: grid; place-items: center; width: 28px; height: 28px; padding: 0; border: 1px solid #d9534f; border-radius: 50%; background: #fa8b8b; }
.frame { position: absolute; left: 793px; top: 489px; width: 302px; height: 51px; border: 8px solid #f00; border-radius: 4px; }
.num { position: absolute; color: #f00; font: 70px/1 "Liberation Sans", sans-serif; }
.two { left: 933px; top: 311px; }
.three { left: 1122px; top: 314px; }
.arrows { position: absolute; left: 930px; top: 390px; }
```
